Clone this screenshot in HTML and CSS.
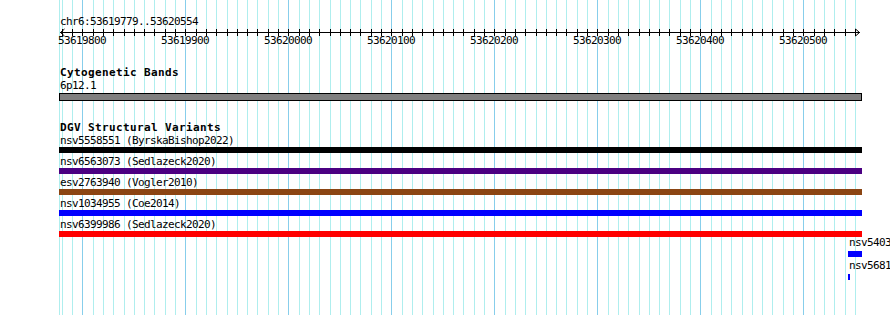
FILE: index.html
```html
<!DOCTYPE html>
<html lang="en">
<head>
    <meta charset="UTF-8">
    <meta name="viewport" content="width=device-width, initial-scale=1.0">
    <title>chr6:53619779..53620554</title>
    <link rel="stylesheet" href="styles.css">
</head>
<body>
    <div class="browser">
        <svg class="grid" id="grid" width="890" height="315"></svg>

        <div class="overview">chr6:53619779..53620554</div>
        <svg class="ruler" id="ruler" width="890" height="18"></svg>

        <section class="track">
            <h2 class="track-name">Cytogenetic Bands</h2>
            <div class="feature">
                <div class="label">6p12.1</div>
                <div class="band"></div>
            </div>
        </section>

        <section class="track">
            <h2 class="track-name">DGV Structural Variants</h2>
            <div class="feature">
                <div class="label">nsv5558551 (ByrskaBishop2022)</div>
                <div class="bar black"></div>
            </div>
            <div class="feature">
                <div class="label">nsv6563073 (Sedlazeck2020)</div>
                <div class="bar purple"></div>
            </div>
            <div class="feature">
                <div class="label">esv2763940 (Vogler2010)</div>
                <div class="bar brown"></div>
            </div>
            <div class="feature">
                <div class="label">nsv1034955 (Coe2014)</div>
                <div class="bar blue"></div>
            </div>
            <div class="feature">
                <div class="label">nsv6399986 (Sedlazeck2020)</div>
                <div class="bar red"></div>
            </div>
            <div class="small" style="margin-left: 789px">
                <div class="label">nsv5403</div>
                <div class="bar blue" style="width: 14px"></div>
            </div>
            <div class="small" style="margin-left: 789px">
                <div class="label">nsv5681</div>
                <div class="bar blue" style="width: 2px"></div>
            </div>
        </section>
    </div>

    <script>
        const SVG_NS = 'http://www.w3.org/2000/svg';
        const grid = document.getElementById('grid');
        const ruler = document.getElementById('ruler');

        // 1.03 px per base, 53619800 sits at x=82.3
        function toPx(bp) {
            return Math.round(82.3 + (bp - 53619800) * 1.03);
        }

        function addLine(svg, x1, y1, x2, y2, cls) {
            const line = document.createElementNS(SVG_NS, 'line');
            line.setAttribute('x1', x1);
            line.setAttribute('y1', y1);
            line.setAttribute('x2', x2);
            line.setAttribute('y2', y2);
            line.setAttribute('class', cls);
            svg.appendChild(line);
        }

        function addArrow(points) {
            const arrow = document.createElementNS(SVG_NS, 'polyline');
            arrow.setAttribute('points', points);
            arrow.setAttribute('class', 'arrow');
            ruler.appendChild(arrow);
        }

        addLine(grid, 59.5, 0, 59.5, 315, 'minor');
        addLine(ruler, 60, 4.5, 860, 4.5, 'axis');
        addArrow('64.5,1 60.5,4.5 64.5,8');
        addArrow('855.5,1 859.5,4.5 855.5,8');

        for (let bp = 53619780; bp <= 53620550; bp += 10) {
            const x = toPx(bp) + 0.5;
            const major = bp % 100 === 0;
            addLine(grid, x, 0, x, 315, major ? 'major' : 'minor');
            addLine(ruler, x, 1, x, 8, 'axis');
            if (major) {
                const label = document.createElementNS(SVG_NS, 'text');
                label.setAttribute('x', x - 24.5);
                label.setAttribute('y', 16);
                label.setAttribute('class', 'tick-label');
                label.textContent = bp;
                ruler.appendChild(label);
            }
        }
    </script>
</body>
</html>
```

FILE: styles.css
```css
body {
    margin: 0;
    background: #fff;
    color: #000;
    font-family: "DejaVu Sans Mono", "Liberation Mono", monospace;
    font-size: 11px;
    letter-spacing: -0.62px;
}

.browser {
    position: relative;
    width: 890px;
    height: 315px;
    overflow: hidden;
}

.grid {
    position: absolute;
    top: 0;
    left: 0;
}

.grid line {
    stroke-width: 1;
    shape-rendering: crispEdges;
}

.grid .minor { stroke: #afeeee; }
.grid .major { stroke: #87ceeb; }

.overview,
.ruler,
.track {
    position: relative;
}

.overview {
    padding: 15px 0 0 60px;
    line-height: 13px;
    white-space: nowrap;
}

.ruler {
    display: block;
}

.ruler .axis {
    stroke: #000;
    stroke-width: 1;
    shape-rendering: crispEdges;
}

.ruler .arrow {
    fill: none;
    stroke: #000;
    stroke-width: 1;
}

.tick-label {
    font-family: "DejaVu Sans Mono", "Liberation Mono", monospace;
    font-size: 11px;
    letter-spacing: -0.62px;
    fill: #000;
}

.track {
    margin-top: 21px;
    padding-left: 59px;
}

.track-name {
    margin: 0;
    padding-left: 1px;
    font-size: 11px;
    font-weight: bold;
    letter-spacing: 0.38px;
    line-height: 12px;
    white-space: nowrap;
}

.label {
    padding-left: 1px;
    line-height: 13px;
    white-space: nowrap;
}

.band {
    margin-top: 1px;
    width: 801px;
    height: 6px;
    border: 1px solid #000;
    background: #808080;
}

.bar {
    width: 803px;
    height: 6px;
}

.feature + .feature { margin-top: 2px; }

.small .label { line-height: 12px; }
.small .bar { margin-top: 2px; }
.small + .small { margin-top: 3px; }

.black { background: #000; }
.purple { background: #4b0082; }
.brown { background: #8b4513; }
.blue { background: #0000ff; }
.red { background: #ff0000; }
```
